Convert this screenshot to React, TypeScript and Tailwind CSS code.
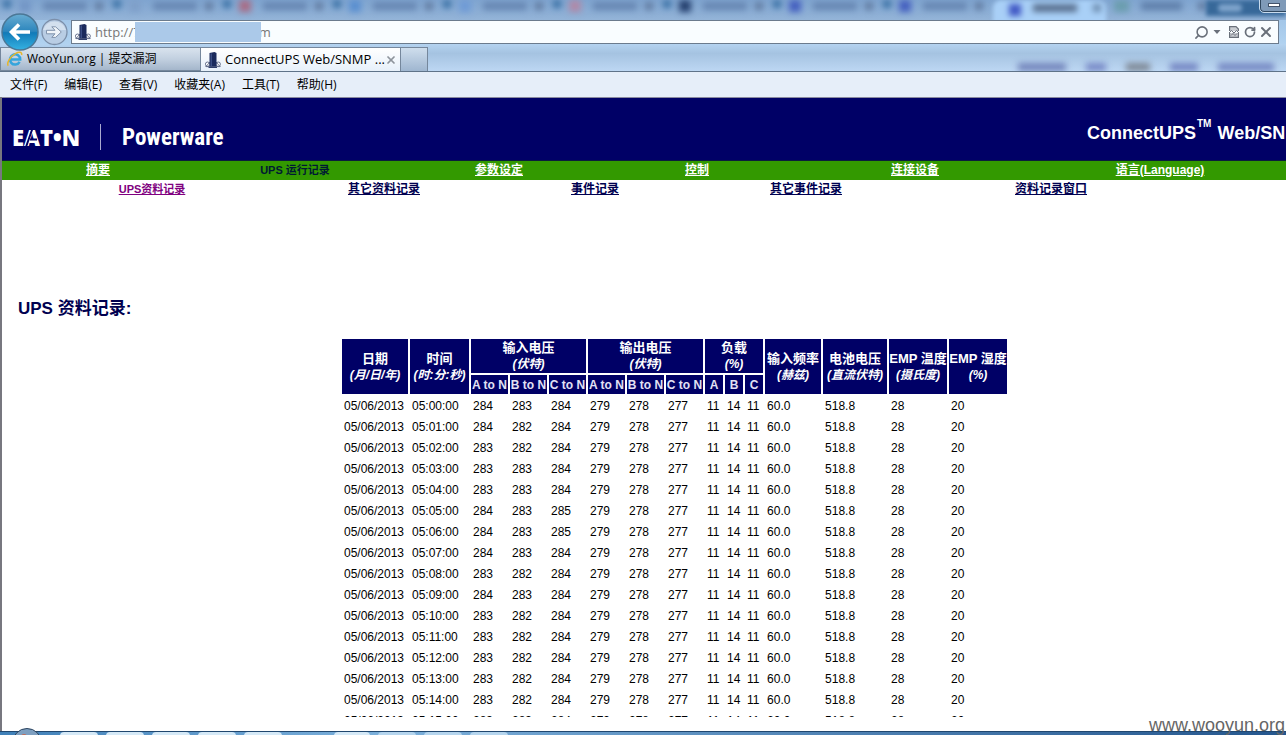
import React from "react";
import { Search, X, RotateCw } from "lucide-react";

const GLASS_TABS = [
  "bg-[#7396c6]",
  "bg-[#7f9fc9]",
  "bg-[#a86d86]",
  "bg-[#5a8fd0]",
  "bg-[#6f9bd6]",
  "bg-[#b08aa8]",
  "bg-[#25406e]",
  "bg-[#4560c0]",
  "bg-[#4560c0]",
];

const MENUS = ["文件(F)", "编辑(E)", "查看(V)", "收藏夹(A)", "工具(T)", "帮助(H)"];

const READINGS: [number, number, number][] = [
  [284, 283, 284],
  [284, 282, 284],
  [283, 282, 284],
  [283, 283, 284],
  [283, 283, 284],
  [284, 283, 285],
  [284, 283, 285],
  [284, 283, 284],
  [283, 282, 284],
  [284, 283, 284],
  [283, 282, 284],
  [283, 282, 284],
  [283, 282, 284],
  [283, 282, 284],
  [283, 282, 284],
  [283, 283, 284],
];

const ROWS = READINGS.map((input, i) => [
  "05/06/2013",
  `05:${String(i).padStart(2, "0")}:00`,
  ...input,
  279,
  278,
  277,
  11,
  14,
  11,
  "60.0",
  "518.8",
  28,
  20,
]);

const COLUMNS = [
  "w-[66px]",
  "w-[59px]",
  "w-[37px]",
  "w-[37px]",
  "w-[37px]",
  "w-[37px]",
  "w-[37px]",
  "w-[37px]",
  "w-[18px]",
  "w-[18px]",
  "w-[18px]",
  "w-[56px]",
  "w-[64px]",
  "w-[58px]",
  "w-[58px]",
];

function TowerIcon() {
  return (
    <svg className="size-4 shrink-0" viewBox="0 0 16 16" aria-hidden="true">
      <g fill="#fff" stroke="#5b6685" strokeWidth="0.9">
        <circle cx="2.6" cy="12.2" r="2.2" />
        <circle cx="13.2" cy="12.2" r="2.2" />
        <path d="M0.500 15 L5 10 M15.500 15 L11 10 M1 14.600 H15" fill="none" />
      </g>
      <path d="M4.500 1 L9.500 0 L11.500 1 V14.600 H4.500 Z" fill="#1a2a5c" />
      <path d="M6.200 1.500 V14" stroke="#4a5f98" strokeWidth="1" />
      <path d="M3.500 15.400 H12" stroke="#1a2a5c" strokeWidth="1" />
    </svg>
  );
}

function ExplorerIcon() {
  return (
    <svg className="size-4 shrink-0" viewBox="0 0 16 16" aria-hidden="true">
      <path d="M12.600 10.900 A5.100 5.100 0 1 1 13.200 8.600 H4" fill="none" stroke="#35a5dc" strokeWidth="2.5" />
      <path d="M1.400 14.600 C-0.800 12.600 3.200 5.400 8.400 2.600 C11.600 0.800 15.400 0.600 14.600 4" fill="none" stroke="#e6b52c" strokeWidth="1.5" />
    </svg>
  );
}

function NavButtons() {
  return (
    <div className="relative z-10 flex h-7 w-[71px] shrink-0 items-center">
      <button aria-label="Back" className="-my-2 shrink-0">
        <svg className="size-10" viewBox="0 0 40 40">
          <defs>
            <linearGradient id="back" x1="0" y1="0" x2="0" y2="1">
              <stop offset="0" stopColor="#68acd2" />
              <stop offset="0.48" stopColor="#2c86bd" />
              <stop offset="0.52" stopColor="#117ab8" />
              <stop offset="1" stopColor="#35b2e2" />
            </linearGradient>
          </defs>
          <circle cx="20" cy="20" r="18" fill="url(#back)" stroke="#4b7796" strokeWidth="1.5" />
          <path d="M30 20 H12 M19 12.500 L11.500 20 L19 27.500" fill="none" stroke="#fff" strokeWidth="3.600" />
        </svg>
      </button>
      <button aria-label="Forward" className="shrink-0">
        <svg className="size-7" viewBox="0 0 28 28">
          <circle cx="14.500" cy="14" r="12.500" fill="#b9cde4" stroke="#7c8fa9" strokeWidth="1.300" />
          <path d="M3 12 A12 12 0 0 1 26 12 Z" fill="#d3e0ee" />
          <path d="M6.500 12.300 H15 L11.800 8.800 H15.600 L21.300 14 L15.600 19.400 H11.800 L15 15.800 H6.500 Z" fill="#eff4f9" stroke="#8193ac" strokeWidth="1" />
        </svg>
      </button>
    </div>
  );
}

function GlassStrip() {
  return (
    <div className="relative flex h-5 shrink-0 overflow-hidden bg-linear-to-b from-[#80a5d0] to-[#94b4d8] pl-[3px]" aria-hidden="true">
      {GLASS_TABS.map((tone, i) => (
        <div key={i} className="flex h-3 w-[110px] shrink-0 items-center blur-[3px]">
          <span className="h-2 w-2 self-start bg-[#376fa4]" />
          <span className={`ml-2 h-3 w-3 ${tone}`} />
          <span className="ml-3 h-2 w-11 bg-[#6686b2]" />
          <span className="ml-2 size-2 bg-[#60799f]" />
        </div>
      ))}
      <div className="flex h-6 w-[113px] shrink-0 items-start rounded-t-lg bg-[#a9d0f7] pt-1 pl-4 blur-[2px]">
        <span className="h-3 w-3 bg-[#4057c4] blur-[2px]" />
        <span className="ml-3 h-2 w-11 bg-[#59708f] blur-[2px]" />
        <span className="ml-4 size-2 bg-[#6d8cae] blur-[2px]" />
      </div>
      <div className="flex h-3 w-[100px] shrink-0 items-center blur-[3px]">
        <span className="ml-2 h-3 w-4 bg-[#6b9dae]" />
        <span className="ml-3 h-2 w-11 bg-[#5e7ea9]" />
        <span className="ml-4 size-2 bg-[#60799f]" />
      </div>
      <div className="h-4 flex-1 bg-[#376899] pt-1 pl-3 blur-[2px]">
        <div className="h-2 w-6 rounded bg-[#7da3cb]" />
      </div>
      <div className="absolute top-0 right-0 flex h-3 w-[26px] items-start justify-center rounded-bl border-b border-l border-[#304860] bg-[#7f9ab8] pt-[3px] outline outline-[#c9dcef]">
        <span className="h-1 w-3 border border-[#43536a] bg-white" />
      </div>
    </div>
  );
}

function AddressRow() {
  return (
    <div className="flex h-6 shrink-0 items-center bg-linear-to-b from-[#a3c6e8] to-[#b1d2f0] pr-[7px]">
      <NavButtons />
      <div className="flex h-6 min-w-0 flex-1 items-center border border-[#6b7b8d] bg-[#f9fdff] pr-1 pl-[3px]">
        <TowerIcon />
        <div className="relative ml-1 flex-1">
          <input
            aria-label="Address"
            readOnly
            defaultValue="http://7                                   m"
            className="block w-full bg-transparent font-['Open_Sans',sans-serif] text-[13px] leading-5 whitespace-pre text-[#777] outline-none"
          />
          <span className="absolute top-0 left-[40px] h-5 w-[126px] bg-[#abc9e9]" />
        </div>
        <div className="flex items-center text-[#69707a]">
          <button aria-label="Search">
            <Search className="size-[15px] -scale-x-100" strokeWidth={2.5} />
          </button>
          <button aria-label="Search options" className="ml-1">
            <svg className="h-2 w-2" viewBox="0 0 8 8">
              <path d="M0.500 2 H7.500 L4 6 Z" fill="currentColor" />
            </svg>
          </button>
          <button aria-label="Compatibility view" className="ml-2">
            <svg className="h-3 w-[10px]" viewBox="0 0 10 12">
              <path d="M0.600 5 V0.600 H7 L9.400 3 V5 M0.600 7 V11.400 H9.400 V7" fill="#c9cdd2" stroke="currentColor" strokeWidth="1.200" />
              <path d="M0 7 L2.500 4.500 L5 7 L7.500 4.500 L10 7 M2 9.500 L4 7.500 L6 9.500 L8 7.500" fill="none" stroke="currentColor" strokeWidth="1" />
            </svg>
          </button>
          <button aria-label="Refresh" className="ml-[5px]">
            <RotateCw className="size-3" strokeWidth={3.5} />
          </button>
          <button aria-label="Stop" className="ml-[2px]">
            <X className="size-4" strokeWidth={3} />
          </button>
        </div>
      </div>
    </div>
  );
}

function TabRow() {
  return (
    <div className="relative flex h-[27px] shrink-0 items-end overflow-hidden bg-linear-to-b from-[#b4d3f0] via-[#a5c3e1] via-35% to-[#bdd7f3] font-['Open_Sans','Noto_Sans_CJK_SC',sans-serif] text-[12px] text-black">
      <div className="flex h-6 w-[201px] items-center gap-1 overflow-hidden border border-[#75879c] bg-linear-to-b from-[#d9e3ee] via-[#c2d0e0] to-[#a4b6cb] pl-1.5 whitespace-nowrap">
        <ExplorerIcon />
        <a href="#wooyun">WooYun.org | 提交漏洞</a>
      </div>
      <div className="flex h-6 w-[200px] items-center gap-1 border-t border-r border-[#75879c] bg-linear-to-b from-white to-[#e7f0fa] pr-1 pl-1 whitespace-nowrap">
        <TowerIcon />
        <a href="#connectups" className="flex-1 text-[13px]">ConnectUPS Web/SNMP ...</a>
        <button aria-label="Close tab" className="-ml-1 shrink-0 text-[#8e949c]">
          <X className="size-3" strokeWidth={3.5} />
        </button>
      </div>
      <button aria-label="New tab" className="h-6 w-[27px] border-t border-r border-[#75879c] bg-linear-to-b from-[#cfdeed] to-[#9fb6d0]" />
      <div className="ml-auto flex h-2 gap-3 pr-3 blur-[3px]" aria-hidden="true">
        <span className="w-12 bg-[#7284bb]" />
        <span className="ml-2 w-5 bg-[#7688c6]" />
        <span className="ml-2 w-6 bg-[#7d8794]" />
        <span className="ml-2 w-7 bg-[#7385c2]" />
        <span className="ml-2 w-14 bg-[#7487c2]" />
      </div>
    </div>
  );
}

function MenuBar() {
  return (
    <nav className="flex h-[26px] shrink-0 items-center gap-[17px] border-t border-[#5f7389] bg-[#e6eef9] pl-[10px] font-['Open_Sans','Noto_Sans_CJK_SC',sans-serif] text-[12px] text-black">
      {MENUS.map((m) => (
        <button key={m}>{m}</button>
      ))}
    </nav>
  );
}

function Banner() {
  return (
    <header className="flex h-16 shrink-0 items-center overflow-hidden border-t border-b border-t-[#8a8aa0] border-b-[#0b1c3c] bg-[#000066] pl-[10px] whitespace-nowrap text-white">
      <div className="relative mt-4 w-[67px] font-['Open_Sans',sans-serif] text-[22px] leading-6 font-extrabold">
        EAT•N
        <svg className="absolute inset-0 size-full" viewBox="0 0 67 24" aria-hidden="true">
          <path d="M14 22 L21 2" stroke="#000066" strokeWidth="2" />
          <path d="M18 14.500 H25" stroke="#000066" strokeWidth="2" />
        </svg>
      </div>
      <div className="mt-4 ml-[21px] h-[26px] w-px bg-[#a9a9cf]" />
      <div className="mt-[18px] ml-[21px] font-['Roboto_Condensed','Open_Sans_Condensed','Noto_Sans_Condensed',Roboto,sans-serif] text-[23px] leading-6 font-bold">
        Powerware
      </div>
      <h1 className="mt-2 ml-auto w-[199px] shrink-0 text-[18px] leading-6 font-bold">
        ConnectUPS<sup className="-top-3 mx-px text-[10px]">TM</sup> Web/SNMP Card
      </h1>
    </header>
  );
}

function SiteNav() {
  return (
    <>
      <nav className="grid h-[19px] shrink-0 grid-cols-[192fr_202fr_206fr_190fr_246fr_244fr_4fr] items-center bg-[#339900] pb-[2px] text-center text-[12px] leading-4 font-bold whitespace-nowrap text-white">
        <a href="#summary" className="underline">摘要</a>
        <span className="text-[11px] text-[#001a33]">UPS 运行记录</span>
        <a href="#settings" className="underline">参数设定</a>
        <a href="#control" className="underline">控制</a>
        <a href="#devices" className="underline">连接设备</a>
        <a href="#language" className="underline">语言(Language)</a>
      </nav>
      <nav className="grid h-[19px] shrink-0 grid-cols-[300fr_164fr_258fr_164fr_326fr_72fr] items-center pb-[2px] text-center text-[12px] leading-4 font-bold whitespace-nowrap text-[#000050]">
        <a href="#ups-data" className="text-[11px] text-[#800080] underline">UPS资料记录</a>
        <a href="#other-data" className="underline">其它资料记录</a>
        <a href="#events" className="underline">事件记录</a>
        <a href="#other-events" className="underline">其它事件记录</a>
        <a href="#window" className="underline">资料记录窗口</a>
      </nav>
    </>
  );
}

function Head({ title, unit, ...rest }: { title: string; unit: string } & React.ThHTMLAttributes<HTMLTableCellElement>) {
  return (
    <th {...rest} className="bg-[#000066] p-0 align-middle whitespace-nowrap text-white">
      {title}
      <br />
      <i className="text-[12px]">({unit})</i>
    </th>
  );
}

function DataTable() {
  return (
    <table className="w-[669px] shrink-0 table-fixed border-separate border-spacing-[2px] text-[12px] leading-4">
      <colgroup>
        {COLUMNS.map((c, i) => (
          <col key={i} className={c} />
        ))}
      </colgroup>
      <thead className="text-[13px]">
        <tr className="h-[34px]">
          <Head rowSpan={2} title="日期" unit="月/日/年" />
          <Head rowSpan={2} title="时间" unit="时:分:秒" />
          <Head colSpan={3} title="输入电压" unit="伏特" />
          <Head colSpan={3} title="输出电压" unit="伏特" />
          <Head colSpan={3} title="负载" unit="%" />
          <Head rowSpan={2} title="输入频率" unit="赫兹" />
          <Head rowSpan={2} title="电池电压" unit="直流伏特" />
          <Head rowSpan={2} title="EMP 温度" unit="摄氏度" />
          <Head rowSpan={2} title="EMP 湿度" unit="%" />
        </tr>
        <tr className="h-[19px] text-[12px]">
          {["A to N", "B to N", "C to N", "A to N", "B to N", "C to N", "A", "B", "C"].map((t, i) => (
            <th key={i} className="bg-[#000066] p-0 whitespace-nowrap text-[#e2e2f4]">
              {t}
            </th>
          ))}
        </tr>
      </thead>
      <tbody>
        {ROWS.map((row, r) => (
          <tr key={r} className="h-[19px]">
            {row.map((v, c) => (
              <td key={c} className="px-[2px] py-0 whitespace-nowrap">
                {v}
              </td>
            ))}
          </tr>
        ))}
      </tbody>
    </table>
  );
}

function TaskBar() {
  return (
    <footer className="relative flex h-1 shrink-0 border-t border-[#20476f] bg-linear-to-r from-[#3f80b8] via-[#7db1dc] via-30% to-[#24568d] pl-[60px]">
      <svg className="absolute -top-1 left-2 h-2 w-9" viewBox="0 0 36 8" aria-hidden="true">
        <circle cx="19" cy="15" r="14.500" fill="#7e9fc0" stroke="#2b435e" strokeWidth="1" />
        <circle cx="16" cy="9" r="3" fill="#c46b55" />
      </svg>
      <div className="flex gap-2 overflow-hidden" aria-hidden="true">
        {[0, 1, 2, 3, 4].map((n) => (
          <span key={n} className="h-1 w-[38px] rounded-t bg-[#d5e9f7]" />
        ))}
        <span className="ml-11 h-1 w-9 rounded-t bg-[#d5e9f7]" />
        {[0, 1, 2].map((n) => (
          <span key={n} className="h-1 w-[38px] rounded-t bg-[#b5d5ee]" />
        ))}
      </div>
    </footer>
  );
}

export default function App() {
  return (
    <div className="relative flex h-screen flex-col overflow-hidden bg-white font-['Liberation_Sans','Noto_Sans_CJK_SC',sans-serif] text-black">
      <GlassStrip />
      <AddressRow />
      <TabRow />
      <MenuBar />
      <div className="flex min-h-0 flex-1 flex-col border-l-2 border-[#77777f] pb-[14px]">
        <Banner />
        <SiteNav />
        <main className="flex min-h-0 flex-1 flex-col overflow-hidden pt-[98px]">
          <h2 className="pl-4 text-[17px] leading-6 font-bold text-[#000050]">UPS 资料记录:</h2>
          <div className="flex justify-center pt-4 pl-[61px]">
            <DataTable />
          </div>
        </main>
      </div>
      <TaskBar />
      <div className="absolute right-0 bottom-0 pr-px text-[18px] leading-5 text-[#666]">www.wooyun.org</div>
    </div>
  );
}
